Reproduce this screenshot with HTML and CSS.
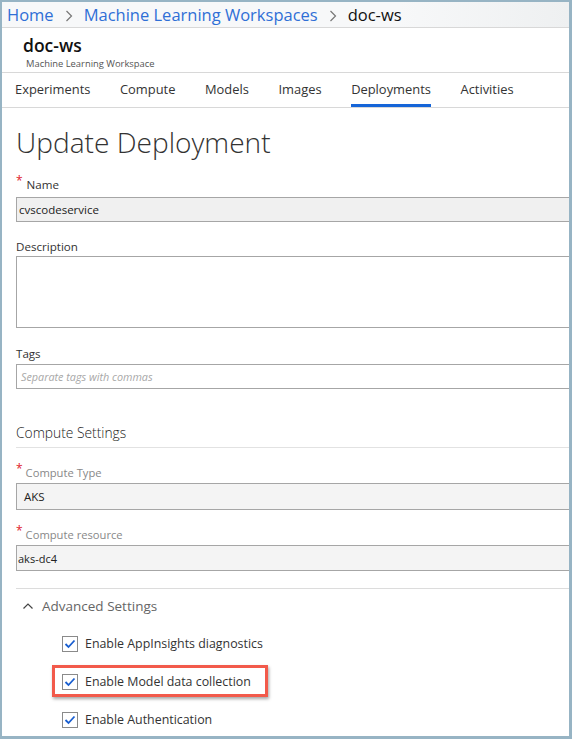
FILE: index.html
```html
<!DOCTYPE html>
<html>
<head>
<meta charset="utf-8">
<link rel="stylesheet" href="styles.css">
</head>
<body>
<div class="frame">
  <div class="crumbs">
    <a class="crumb">Home</a>
    <svg class="sep" width="8" height="12" viewBox="0 0 8 12"><polyline points="1.5,1 6.5,6 1.5,11" fill="none" stroke="#777" stroke-width="1.2"/></svg>
    <a class="crumb">Machine Learning Workspaces</a>
    <svg class="sep" width="8" height="12" viewBox="0 0 8 12"><polyline points="1.5,1 6.5,6 1.5,11" fill="none" stroke="#777" stroke-width="1.2"/></svg>
    <span class="crumb current">doc-ws</span>
  </div>
  <div class="header">
    <div class="ws-name">doc-ws</div>
    <div class="ws-type">Machine Learning Workspace</div>
  </div>
  <nav class="tabs">
    <span class="tab">Experiments</span>
    <span class="tab">Compute</span>
    <span class="tab">Models</span>
    <span class="tab">Images</span>
    <span class="tab active">Deployments</span>
    <span class="tab">Activities</span>
  </nav>
  <main class="content">
    <h1 class="title">Update Deployment</h1>

    <div class="field f-name">
      <div class="label"><span class="req">*</span>Name</div>
      <div class="input filled">cvscodeservice</div>
    </div>

    <div class="field f-desc">
      <div class="label">Description</div>
      <div class="input area"></div>
    </div>

    <div class="field f-tags">
      <div class="label">Tags</div>
      <div class="input plain placeholder">Separate tags with commas</div>
    </div>

    <h2 class="section">Compute Settings</h2>

    <div class="field f-ctype">
      <div class="label muted"><span class="req">*</span>Compute Type</div>
      <div class="input grey">AKS</div>
    </div>

    <div class="field f-cres">
      <div class="label muted"><span class="req">*</span>Compute resource</div>
      <div class="input grey res">aks-dc4</div>
    </div>

    <div class="advanced">
      <svg class="chev" width="12" height="8" viewBox="0 0 12 8"><polyline points="1.5,6.5 6,2 10.5,6.5" fill="none" stroke="#444" stroke-width="1.2"/></svg>
      <span>Advanced Settings</span>
    </div>

    <div class="checks">
      <label class="check">
        <span class="box"><svg width="12" height="10" viewBox="0 0 12 10"><polyline points="1.5,5 4.5,8 10.5,1.5" fill="none" stroke="#1a5fd0" stroke-width="1.8"/></svg></span>
        <span>Enable AppInsights diagnostics</span>
      </label>
      <label class="check highlighted">
        <span class="box"><svg width="12" height="10" viewBox="0 0 12 10"><polyline points="1.5,5 4.5,8 10.5,1.5" fill="none" stroke="#1a5fd0" stroke-width="1.8"/></svg></span>
        <span>Enable Model data collection</span>
      </label>
      <label class="check">
        <span class="box"><svg width="12" height="10" viewBox="0 0 12 10"><polyline points="1.5,5 4.5,8 10.5,1.5" fill="none" stroke="#1a5fd0" stroke-width="1.8"/></svg></span>
        <span>Enable Authentication</span>
      </label>
    </div>
  </main>
</div>
</body>
</html>
```

FILE: styles.css
```css
*, *::before, *::after { box-sizing: border-box; }
html, body { margin: 0; padding: 0; background: #97b4c4; }
body { font-family: "Open Sans", "Noto Sans", sans-serif; color: #333; }

.frame {
  width: 572px;
  height: 739px;
  border-style: solid;
  border-color: #97b4c4;
  border-width: 2px 3px 3px 2px;
  background: #fff;
  overflow: hidden;
}

.crumbs {
  height: 26px;
  display: flex;
  align-items: center;
  padding-left: 5px;
  background: linear-gradient(to right, #f7f8f9 70%, #eef0f1 100%);
  border-bottom: 1px solid #d8d8d8;
}
.crumb { font-size: 16.5px; color: #2f6fd6; white-space: nowrap; line-height: 26px; }
.crumb.current { color: #111; }
.sep { margin: 2px 11px 0 11px; }

.header {
  height: 45px;
  padding: 6px 0 0 21px;
  border-bottom: 1px solid #d8d8d8;
}
.ws-name { font-size: 17.5px; font-weight: 600; line-height: 22px; color: #111; }
.ws-type { font-size: 9.4px; color: #555; line-height: 11px; margin-left: 3px; margin-top: 2px; }

.tabs {
  height: 35px;
  display: flex;
  padding-left: 13px;
  gap: 29.6px;
  border-bottom: 1px solid #d8d8d8;
}
.tab {
  font-size: 12.9px;
  color: #333;
  line-height: 30px;
  padding-top: 1px;
  border-bottom: 3px solid transparent;
  white-space: nowrap;
}
.tab.active { border-bottom-color: #1565d8; }

.content { padding: 14px 0 0 14px; }
.title {
  margin: 0;
  font-weight: 300;
  font-size: 28.1px;
  line-height: 40px;
  color: #333;
}

.field { margin-right: -10px; }
.label { font-size: 11.6px; color: #333; line-height: 16px; }
.label.muted { color: #888; font-size: 11.2px; }
.req { color: #e0202a; font-size: 12px; vertical-align: 4px; margin-right: 4px; line-height: 0; }
.label.muted .req { margin-right: 3px; }
.input {
  border: 1px solid #a6a6a6;
  font-size: 11.5px;
  padding-left: 5px;
  color: #222;
  display: flex;
  align-items: center;
}
.input.filled { background: #f0f0f0; height: 25px; padding-left: 2px; }
.input.area { height: 72px; background: #fff; }
.input.plain { height: 25px; background: #fff; }
.input.placeholder { color: #a8a8a8; font-style: italic; font-size: 10.8px; padding-left: 4px; }
.input.grey { background: #f4f4f4; height: 27px; padding-left: 7px; }
.input.grey.res { height: 26px; padding-left: 1px; font-size: 11px; }

.f-name { margin-top: 15px; }
.f-name .label { margin-bottom: 4px; }
.f-desc { margin-top: 17px; }
.f-desc .label { margin-bottom: 1px; }
.f-tags { margin-top: 18px; }
.f-tags .label { margin-bottom: 2px; }

.section {
  margin: 33px -10px 0 0;
  font-weight: 300;
  font-size: 13.8px;
  color: #222;
  line-height: 22px;
  padding-bottom: 3px;
  border-bottom: 1px solid #e2e2e2;
}
.f-ctype { margin-top: 17px; }
.f-ctype .label { margin-bottom: 2px; }
.f-cres { margin-top: 17px; }
.f-cres .label { margin-bottom: 2px; }

.advanced {
  margin: 17px -10px 0 0;
  border-top: 1px solid #dcdcdc;
  padding: 7px 0 0 6px;
  display: flex;
  align-items: center;
  font-size: 13.5px;
  color: #666;
  line-height: 20px;
}
.chev { margin-right: 8px; }

.checks {
  display: flex;
  flex-direction: column;
  gap: 21px;
  padding: 19px 0 0 46px;
}
.check {
  display: flex;
  align-items: center;
  font-size: 12.4px;
  color: #333;
  line-height: 17px;
  width: max-content;
  position: relative;
}
.box {
  width: 16px;
  height: 16px;
  border: 1px solid #8a8a8a;
  background: #fff;
  display: flex;
  align-items: center;
  justify-content: center;
  margin-right: 7px;
}
.check.highlighted::after {
  content: "";
  position: absolute;
  left: -10px;
  top: -8px;
  width: 216px;
  height: 32px;
  border: 3px solid #f25a4b;
  box-shadow: 1px 2px 3px rgba(0,0,0,0.35);
}
```
